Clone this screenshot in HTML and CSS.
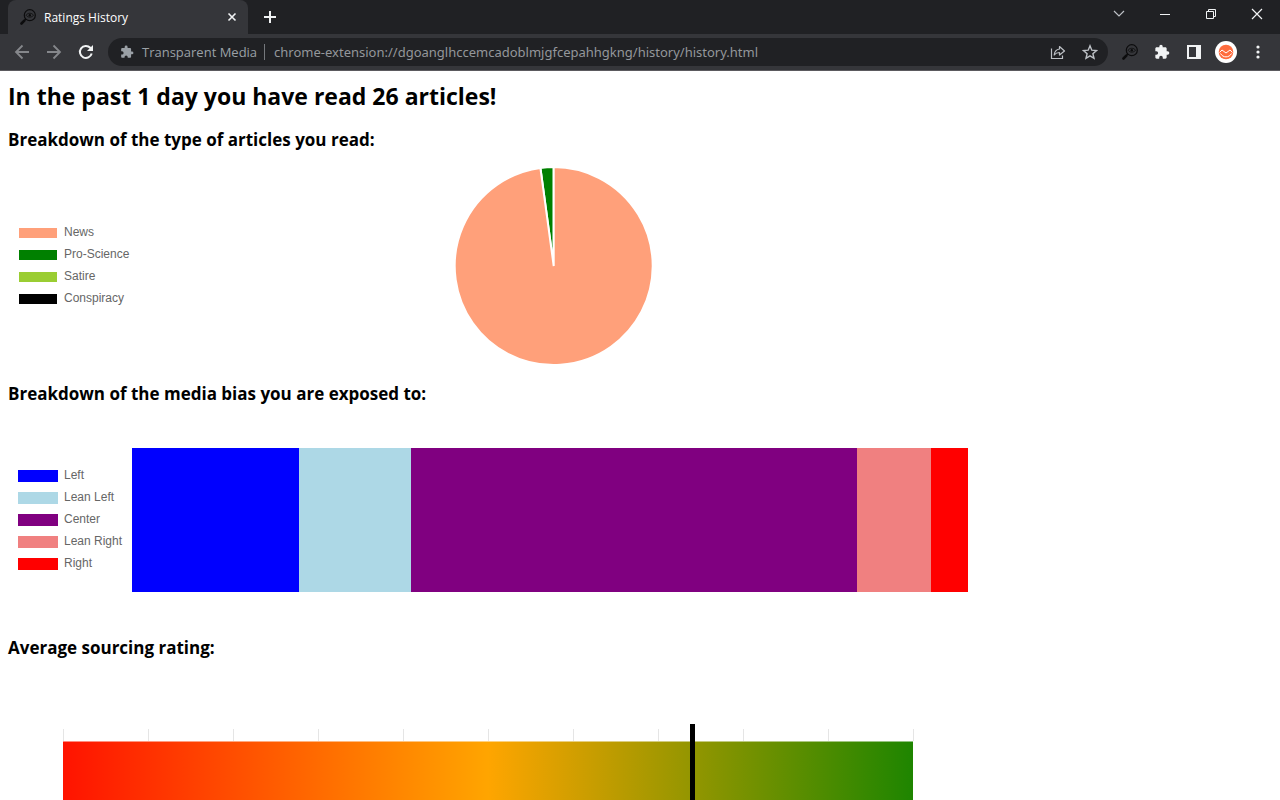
FILE: index.html
```html
<!DOCTYPE html>
<html lang="en">
<head>
<meta charset="utf-8">
<meta name="viewport" content="width=device-width, initial-scale=1">
<title>Ratings History</title>
<link rel="stylesheet" href="styles.css">
</head>
<body>
<svg hidden>
  <symbol id="lens" viewBox="0 0 16 16">
    <g fill="none" stroke="currentColor">
      <circle cx="9.800" cy="6.200" r="5.500" stroke-width="1.200"/>
      <path d="M6 6.200C7.800 3.600 11.800 3.600 13.600 6.200C11.800 8.800 7.800 8.800 6 6.200Z" stroke-width=".8"/>
      <path d="M5.800 10L4.600 11.200" stroke-width="1.200"/>
      <path d="M4.300 11.700L1.500 14.500" stroke-width="2.600" stroke-linecap="round"/>
    </g>
    <circle cx="9.800" cy="6.200" r="1.200" fill="currentColor"/>
  </symbol>
  <symbol id="puzzle" viewBox="0 0 24 24">
    <path fill="currentColor" d="M20.500 11H19V7c0-1.100-.9-2-2-2h-4V3.500a2.500 2.500 0 0 0-5 0V5H4c-1.100 0-2 .9-2 2v3.800h1.500a2.700 2.700 0 0 1 0 5.400H2V20c0 1.100.9 2 2 2h3.800v-1.500a2.700 2.700 0 0 1 5.400 0V22H17c1.100 0 2-.9 2-2v-4h1.500a2.500 2.500 0 0 0 0-5z"/>
  </symbol>
</svg>
<header class="browser">
  <div class="tabstrip">
    <div class="tab">
      <svg class="tab-icon" width="16" height="16"><use href="#lens"/></svg>
      <span class="tab-title">Ratings History</span>
      <button class="icon-button tab-close" aria-label="Close tab"><svg width="10" height="10" viewBox="0 0 10 10"><path d="M1.500 1.500l7 7m0-7l-7 7" stroke="currentColor" stroke-width="1.600"/></svg></button>
    </div>
    <button class="icon-button new-tab" aria-label="New tab"><svg width="12" height="12" viewBox="0 0 12 12"><path d="M6 0v12M0 6h12" stroke="currentColor" stroke-width="2"/></svg></button>
    <div class="window-controls">
      <button class="icon-button" aria-label="Search tabs"><svg width="12" height="12" viewBox="0 0 12 12" fill="none" stroke="#bdc1c6"><path d="M1 3l5 5 5-5" stroke-width="1.200"/></svg></button>
      <button class="icon-button" aria-label="Minimize"><svg width="10" height="10" viewBox="0 0 10 10" stroke="currentColor"><path d="M0 5.500h10"/></svg></button>
      <button class="icon-button" aria-label="Restore"><svg width="10" height="10" viewBox="0 0 10 10" fill="none" stroke="currentColor"><path d="M.5 2.500h7v7h-7zM2.500 2.500v-2h7v7h-2"/></svg></button>
      <button class="icon-button" aria-label="Close window"><svg width="12" height="12" viewBox="0 0 12 12" stroke="currentColor"><path d="M1 1l10 10m0-10L1 11" stroke-width="1.200"/></svg></button>
    </div>
  </div>
  <div class="toolbar">
    <nav class="navigation">
      <button class="icon-button dim" aria-label="Back"><svg width="16" height="16" viewBox="0 0 16 16" fill="none" stroke="currentColor" stroke-width="1.800"><path d="M15 8H2m6.500-6.500L2 8l6.500 6.500"/></svg></button>
      <button class="icon-button dim" aria-label="Forward"><svg width="16" height="16" viewBox="0 0 16 16" fill="none" stroke="currentColor" stroke-width="1.800"><path d="M1 8h13M7.500 1.500L14 8l-6.500 6.500"/></svg></button>
      <button class="icon-button" aria-label="Reload"><svg width="16" height="16" viewBox="0 0 16 16"><path d="M13.700 9.500A6 6 0 1 1 12.300 3.800L14 5.500" fill="none" stroke="currentColor" stroke-width="2"/><path d="M15 1v6H9z" fill="currentColor"/></svg></button>
    </nav>
    <div class="omnibox">
      <svg class="site-icon" width="14" height="14"><use href="#puzzle"/></svg>
      <span class="site-name">Transparent Media</span>
      <input class="address" type="text" aria-label="Address" value="chrome-extension://dgoanglhccemcadoblmjgfcepahhgkng/history/history.html">
      <button class="icon-button" aria-label="Share"><svg width="16" height="16" viewBox="0 0 16 16" fill="none" stroke="currentColor" stroke-width="1.200"><path d="M1.500 4.500v10h11v-3"/><path d="M9.500 2.500L14.500 7l-5 4V8.500c-2.500 0-4 .8-5.300 2.500.3-3.300 2-5.500 5.300-6z" stroke-linejoin="round"/></svg></button>
      <button class="icon-button" aria-label="Bookmark"><svg width="16" height="16" viewBox="0 0 16 16" fill="none" stroke="currentColor" stroke-width="1.400"><path d="M8 1.800l1.800 4.400 4.700.4-3.600 3.100 1.100 4.600-4-2.500-4 2.500 1.100-4.600-3.600-3.100 4.700-.4z"/></svg></button>
    </div>
    <div class="extensions">
      <button class="icon-button lens" aria-label="Transparent Media"><svg width="16" height="16"><use href="#lens"/></svg></button>
      <button class="icon-button" aria-label="Extensions"><svg width="16" height="16"><use href="#puzzle"/></svg></button>
      <button class="icon-button" aria-label="Side panel"><svg width="14" height="14" viewBox="0 0 14 14"><path fill="currentColor" fill-rule="evenodd" d="M0 0h14v14H0zM2 2v10h7V2z"/></svg></button>
      <button class="icon-button" aria-label="Profile"><svg width="22" height="22" viewBox="0 0 22 22"><circle cx="11" cy="11" r="11" fill="#fff"/><circle cx="11" cy="11" r="7.300" fill="#ff6c3e"/><path d="M4.500 11.500L7 9l4 3 4-3 2.500 2.500" fill="none" stroke="#fff"/><path d="M5.500 12.500c2.500 4.500 8.500 4.500 11 0" fill="none" stroke="#fff"/></svg></button>
      <button class="icon-button" aria-label="Menu"><svg width="4" height="16" viewBox="0 0 4 16" fill="currentColor"><circle cx="2" cy="3" r="1.600"/><circle cx="2" cy="8" r="1.600"/><circle cx="2" cy="13" r="1.600"/></svg></button>
    </div>
  </div>
</header>
<main class="page">
  <h1 class="summary">In the past 1 day you have read 26 articles!</h1>

  <h2 class="heading">Breakdown of the type of articles you read:</h2>
  <section class="chart">
    <ul class="legend legend-types">
      <li class="item"><span class="swatch news"></span>News</li>
      <li class="item"><span class="swatch science"></span>Pro-Science</li>
      <li class="item"><span class="swatch satire"></span>Satire</li>
      <li class="item"><span class="swatch conspiracy"></span>Conspiracy</li>
    </ul>
    <div class="pie">
      <svg width="200" height="200" viewBox="0 0 200 200" stroke="#fff" stroke-width="2" stroke-linejoin="bevel" role="img" aria-label="Article types">
        <path fill="#008000" d="M99.700 100L86.400 1.900A99 99 0 0 1 99.700 1z"/>
        <path fill="#ffa07a" d="M99.700 100V1A99 99 0 1 1 86.400 1.900z"/>
      </svg>
    </div>
  </section>

  <h2 class="heading">Breakdown of the media bias you are exposed to:</h2>
  <section class="chart">
    <ul class="legend legend-bias">
      <li class="item"><span class="swatch left"></span>Left</li>
      <li class="item"><span class="swatch lean-left"></span>Lean Left</li>
      <li class="item"><span class="swatch center"></span>Center</li>
      <li class="item"><span class="swatch lean-right"></span>Lean Right</li>
      <li class="item"><span class="swatch right"></span>Right</li>
    </ul>
    <div class="stack" role="img" aria-label="Media bias">
      <span class="left" style="flex-grow:9"></span>
      <span class="lean-left" style="flex-grow:6"></span>
      <span class="center" style="flex-grow:24"></span>
      <span class="lean-right" style="flex-grow:4"></span>
      <span class="right" style="flex-grow:2"></span>
    </div>
  </section>

  <h2 class="heading">Average sourcing rating:</h2>
  <section class="rating">
    <div class="ticks"><i></i><i></i><i></i><i></i><i></i><i></i><i></i><i></i><i></i><i></i></div>
    <div class="gradient"></div>
    <span class="marker" style="left:74%"></span>
  </section>
</main>
</body>
</html>
```
FILE: styles.css
```css
* { box-sizing: border-box; }

body {
  margin: 0;
  height: 100vh;
  display: flex;
  flex-direction: column;
  overflow: hidden;
  background: #fff;
  color: #000;
  font-family: "Open Sans", "Noto Sans", sans-serif;
}

svg { display: block; flex: none; }
svg[hidden] { display: none; }

.icon-button {
  display: grid;
  place-items: center;
  flex: none;
  margin: 0;
  padding: 0;
  border: 0;
  background: none;
  color: inherit;
}

/* Browser frame */
.browser {
  flex: none;
  background: #35363a;
  border-bottom: 1px solid #5b5a5e;
  color: #f1f3f4;
}

.tabstrip {
  display: flex;
  height: 34px;
  padding-left: 8px;
  background: #202124;
}

.tab {
  display: flex;
  align-items: center;
  gap: 8px;
  width: 240px;
  padding: 0 11px 0 12px;
  border-radius: 8px 8px 0 0;
  background: #35363a;
  font-size: 12px;
}

.tab-icon, .lens { color: #0c0c0d; }
.tab-title { flex: 1; color: #fff; }
.new-tab { width: 44px; }

.window-controls {
  display: flex;
  height: 28px;
  margin-left: auto;
}

.window-controls .icon-button { width: 46px; }

.toolbar {
  display: flex;
  align-items: center;
  height: 36px;
}

.navigation {
  display: flex;
  padding: 0 6px;
}

.navigation .icon-button {
  width: 32px;
  height: 32px;
}

.navigation .dim { color: #85878b; }

.omnibox {
  display: flex;
  align-items: center;
  flex: 1;
  min-width: 0;
  height: 28px;
  padding: 0 2px 0 12px;
  border-radius: 14px;
  background: #202124;
  color: #9aa0a6;
  font-size: 13px;
}

.omnibox .icon-button {
  width: 32px;
  height: 28px;
  color: #bdc1c6;
}

.site-icon { margin-right: 8px; }

.site-name {
  padding-right: 7px;
  border-right: 1px solid #75787c;
  line-height: 16px;
  white-space: nowrap;
}

.address {
  flex: 1;
  min-width: 0;
  margin: 0;
  padding: 0 0 0 9px;
  border: 0;
  background: none;
  color: #94979b;
  font: 13px/18px "Noto Sans", "Open Sans", sans-serif;
}

.extensions {
  display: flex;
  padding: 0 6px;
}

.extensions .icon-button {
  width: 32px;
  height: 32px;
}

/* History page */
.page {
  flex: 1;
  min-height: 0;
  padding: 10px 8px 0;
  overflow: hidden;
}

.summary {
  margin: 0 0 17px;
  font-size: 23px;
  font-weight: 700;
  line-height: 30px;
}

.heading {
  margin: 0 0 14px;
  font-size: 17px;
  font-weight: 700;
  line-height: 24px;
}

.chart {
  display: flex;
  align-items: center;
  max-width: 970px;
  height: 200px;
  margin-bottom: 16px;
}

.legend {
  flex: none;
  margin: 0;
  padding: 0 0 0 10px;
  list-style: none;
  color: #666;
  font: 12px/20px "Liberation Sans", Arial, sans-serif;
}

.legend-types {
  width: 122px;
  padding-left: 11px;
}

.legend-bias { width: 124px; }

.item {
  display: flex;
  align-items: center;
  gap: 6px;
  padding-bottom: 2px;
  white-space: nowrap;
}

.swatch {
  width: 40px;
  height: 12px;
  margin-top: 2px;
}

.legend-types .swatch {
  width: 38px;
  height: 10px;
  margin-right: 1px;
}

.news { background: #ffa07a; }
.science { background: #008000; }
.satire { background: #9acd32; }
.conspiracy { background: #000; }
.left { background: #00f; }
.lean-left { background: #add8e6; }
.center { background: #800080; }
.lean-right { background: #f08080; }
.right { background: #f00; }

.pie {
  display: flex;
  justify-content: center;
  flex: 1;
}

.stack {
  display: flex;
  flex: 1;
  height: 144px;
  margin-right: 10px;
}

.stack span { flex-basis: 0; }

.rating {
  position: relative;
  max-width: 851px;
  margin: 69px 55px 0;
}

.ticks {
  display: flex;
  height: 12px;
  border-right: 1px solid #e5e5e5;
}

.ticks i {
  flex: 1;
  border-left: 1px solid #e5e5e5;
}

.gradient {
  height: 120px;
  margin-right: 1px;
  border-top: 1px solid rgba(255, 255, 255, .5);
  background: linear-gradient(to right, #ff1300, #ffa500 50%, #1e8500);
}

.marker {
  position: absolute;
  top: -5px;
  bottom: 0;
  width: 5px;
  margin-left: -3px;
  background: #000;
}
```
